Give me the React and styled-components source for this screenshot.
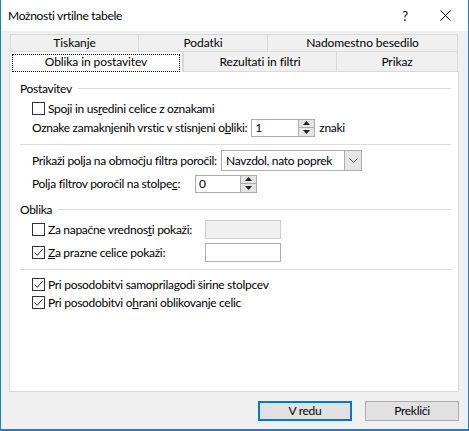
import React from "react";
import styled, { createGlobalStyle } from "styled-components";

const Global = createGlobalStyle`
  html, body { margin: 0; padding: 0; background: #ffffff; }
  body {
    font-family: "Segoe UI", Lato, "Noto Sans", sans-serif;
    font-size: 12px;
    letter-spacing: -0.3px;
    color: #000;
  }
  * { box-sizing: border-box; }
`;

const Window = styled.div`
  width: 469px;
  height: 431px;
  background: #f0f0f0;
  border: 1px solid #1c7bd2;
  border-top: none;
  border-bottom-width: 2px;
  display: flex;
  flex-direction: column;
`;

const TitleBar = styled.div`
  height: 31px;
  background: #ffffff;
  display: flex;
  align-items: center;
  padding-left: 7px;
  flex-shrink: 0;
`;

const Title = styled.div`
  flex: 1;
  font-size: 12px;
  padding-bottom: 1px;
`;

const TitleButton = styled.div`
  width: ${(p) => p.$w}px;
  height: 31px;
  display: flex;
  align-items: center;
  justify-content: center;
  font-size: 13px;
`;

const Body = styled.div`
  flex: 1;
  display: flex;
  flex-direction: column;
  padding: 3px 9px 0 8px;
`;

const Tabs = styled.div`
  margin: 0 1px;
  display: flex;
  flex-direction: column;
`;

const TabRow = styled.div`
  display: grid;
  grid-template-columns: ${(p) => p.$cols};
  height: ${(p) => p.$h}px;
`;

const Tab = styled.div`
  position: relative;
  display: flex;
  align-items: center;
  justify-content: center;
  border-top: 1px solid #d9d9d9;
  border-left: 1px solid #d9d9d9;
  border-right: ${(p) => (p.$active || p.$last ? "1px solid #d9d9d9" : "none")};
  background: ${(p) => (p.$active ? "#ffffff" : "#f0f0f0")};
  margin-bottom: ${(p) => (p.$active ? "-1px" : "0")};
  margin-left: ${(p) => (p.$active ? "-1px" : "0")};
  z-index: ${(p) => (p.$active ? 2 : 1)};
  font-size: 12px;
  letter-spacing: -0.1px;
  padding-bottom: 1px;
`;

const FocusRing = styled.span`
  position: absolute;
  inset: 2px 2px 0 2px;
  border: 1px dotted #000;
`;

const Panel = styled.div`
  height: 321px;
  background: #ffffff;
  border: 1px solid #d9d9d9;
  padding: 8px 7px 0 10px;
  display: flex;
  flex-direction: column;
  flex-shrink: 0;
`;

const GroupHeader = styled.div`
  display: flex;
  align-items: center;
  gap: 6px;
  height: 16px;
  margin-top: ${(p) => p.$mt || 0}px;
  &::after {
    content: "";
    flex: 1;
    border-top: 1px solid #dcdcdc;
  }
`;

const Separator = styled.div`
  border-top: 1px solid #dcdcdc;
  margin-top: ${(p) => p.$mt || 0}px;
`;

const Row = styled.div`
  display: flex;
  align-items: center;
  height: ${(p) => p.$h || 17}px;
  margin-top: ${(p) => p.$mt || 0}px;
  padding-left: 12px;
  gap: ${(p) => p.$gap || 0}px;
  white-space: nowrap;
`;

const FieldLabel = styled.span`
  min-width: ${(p) => p.$w}px;
`;

const CheckLabel = styled.label`
  display: flex;
  align-items: center;
  gap: 3px;
  width: ${(p) => (p.$w ? `${p.$w}px` : "auto")};
`;

const Box = styled.span`
  width: 13px;
  height: 13px;
  border: 1px solid #333333;
  background: #ffffff;
  display: flex;
  align-items: center;
  justify-content: center;
  flex-shrink: 0;
`;

const Spin = styled.div`
  display: flex;
  width: ${(p) => p.$w}px;
  height: 18px;
  border: 1px solid #acacac;
  background: #fff;
`;

const SpinValue = styled.div`
  flex: 1;
  padding-left: 3px;
  display: flex;
  align-items: center;
`;

const SpinButtons = styled.div`
  width: 16px;
  display: flex;
  flex-direction: column;
  border-left: 1px solid #acacac;
`;

const SpinHalf = styled.div`
  flex: 1;
  background: #e5e5e5;
  display: flex;
  align-items: center;
  justify-content: center;
  border-top: ${(p) => (p.$down ? "1px solid #acacac" : "none")};
`;

const Combo = styled.div`
  display: flex;
  width: 141px;
  height: 21px;
  border: 1px solid #acacac;
  background: #fff;
`;

const ComboValue = styled.div`
  flex: 1;
  padding-left: 4px;
  display: flex;
  align-items: center;
`;

const ComboArrow = styled.div`
  width: 17px;
  background: #e5e5e5;
  border-left: 1px solid #acacac;
  display: flex;
  align-items: center;
  justify-content: center;
`;

const TextField = styled.div`
  width: 76px;
  height: 19px;
  border: 1px solid ${(p) => (p.$disabled ? "#cccccc" : "#acacac")};
  background: ${(p) => (p.$disabled ? "#f0f0f0" : "#ffffff")};
`;

const Footer = styled.div`
  display: flex;
  justify-content: flex-end;
  gap: 13px;
  padding-top: 9px;
`;

const Button = styled.button`
  width: 94px;
  height: 20px;
  background: #e1e1e1;
  border: 1px solid ${(p) => (p.$primary ? "#0078d7" : "#adadad")};
  box-shadow: ${(p) => (p.$primary ? "inset 0 0 0 1px #0078d7" : "none")};
  font-family: inherit;
  font-size: 12px;
  letter-spacing: inherit;
  color: #000;
  padding: 0 0 1px;
`;

const Check = ({ on }) => (
  <Box>
    {on && (
      <svg width="11" height="11" viewBox="0 0 11 11">
        <path d="M1.5 5.5 L4.2 8.3 L9.6 2.2" fill="none" stroke="#222" strokeWidth="1" />
      </svg>
    )}
  </Box>
);

const Arrow = ({ up }) => (
  <svg width="7" height="4" viewBox="0 0 7 4">
    <path d={up ? "M0 4 L3.5 0 L7 4 Z" : "M0 0 L3.5 4 L7 0 Z"} fill="#222" />
  </svg>
);

const Spinner = ({ w, value }) => (
  <Spin $w={w}>
    <SpinValue>{value}</SpinValue>
    <SpinButtons>
      <SpinHalf><Arrow up /></SpinHalf>
      <SpinHalf $down><Arrow /></SpinHalf>
    </SpinButtons>
  </Spin>
);

export default function App() {
  return (
    <>
      <Global />
      <Window>
        <TitleBar>
          <Title>Možnosti vrtilne tabele</Title>
          <TitleButton $w={34}>?</TitleButton>
          <TitleButton $w={46}>
            <svg width="11" height="11" viewBox="0 0 11 11">
              <path d="M0.5 0.5 L10.5 10.5 M10.5 0.5 L0.5 10.5" stroke="#000" strokeWidth="1" />
            </svg>
          </TitleButton>
        </TitleBar>
        <Body>
          <Tabs>
            <TabRow $cols="128px 129px 191px" $h={17}>
              <Tab>Tiskanje</Tab>
              <Tab>Podatki</Tab>
              <Tab $last>Nadomestno besedilo</Tab>
            </TabRow>
            <TabRow $cols="173px 153px 122px" $h={20}>
              <Tab $active>
                <FocusRing />
                Oblika in postavitev
              </Tab>
              <Tab>Rezultati in filtri</Tab>
              <Tab $last>Prikaz</Tab>
            </TabRow>
          </Tabs>
          <Panel>
            <GroupHeader>Postavitev</GroupHeader>
            <Row $mt={4} $h={17}>
              <CheckLabel>
                <Check />
                <span>Spoji in us<u>r</u>edini celice z oznakami</span>
              </CheckLabel>
            </Row>
            <Row $mt={1} $h={19} $gap={4}>
              <FieldLabel $w={214}>Oznake zamaknjenih vrstic v stisnjeni o<u>b</u>liki:</FieldLabel>
              <Spinner w={64} value="1" />
              <span>znaki</span>
            </Row>
            <Separator $mt={7} />
            <Row $mt={5} $h={21} $gap={4}>
              <FieldLabel $w={185}>Prikaži polja na območju filtra poročil:</FieldLabel>
              <Combo>
                <ComboValue>Navzdol, nato poprek</ComboValue>
                <ComboArrow>
                  <svg width="9" height="5" viewBox="0 0 9 5">
                    <path d="M0.5 0.5 L4.5 4.5 L8.5 0.5" fill="none" stroke="#555" strokeWidth="1" />
                  </svg>
                </ComboArrow>
              </Combo>
            </Row>
            <Row $mt={3} $h={19} $gap={4}>
              <FieldLabel $w={159}>Polja filtrov poročil na stolpe<u>c</u>:</FieldLabel>
              <Spinner w={62} value="0" />
            </Row>
            <GroupHeader $mt={8}>Oblika</GroupHeader>
            <Row $mt={3} $h={19}>
              <CheckLabel $w={173}>
                <Check />
                <span>Za napačne vrednos<u>t</u>i pokaži:</span>
              </CheckLabel>
              <TextField $disabled />
            </Row>
            <Row $mt={4} $h={19}>
              <CheckLabel $w={173}>
                <Check on />
                <span><u>Z</u>a prazne celice pokaži:</span>
              </CheckLabel>
              <TextField />
            </Row>
            <Separator $mt={7} />
            <Row $mt={6} $h={17}>
              <CheckLabel>
                <Check on />
                <span>Pri posodobitvi samoprila<u>g</u>odi širine stolpcev</span>
              </CheckLabel>
            </Row>
            <Row $mt={1} $h={17}>
              <CheckLabel>
                <Check on />
                <span>Pri posodobitvi o<u>h</u>rani oblikovanje celic</span>
              </CheckLabel>
            </Row>
          </Panel>
          <Footer>
            <Button $primary>V redu</Button>
            <Button>Prekliči</Button>
          </Footer>
        </Body>
      </Window>
    </>
  );
}
